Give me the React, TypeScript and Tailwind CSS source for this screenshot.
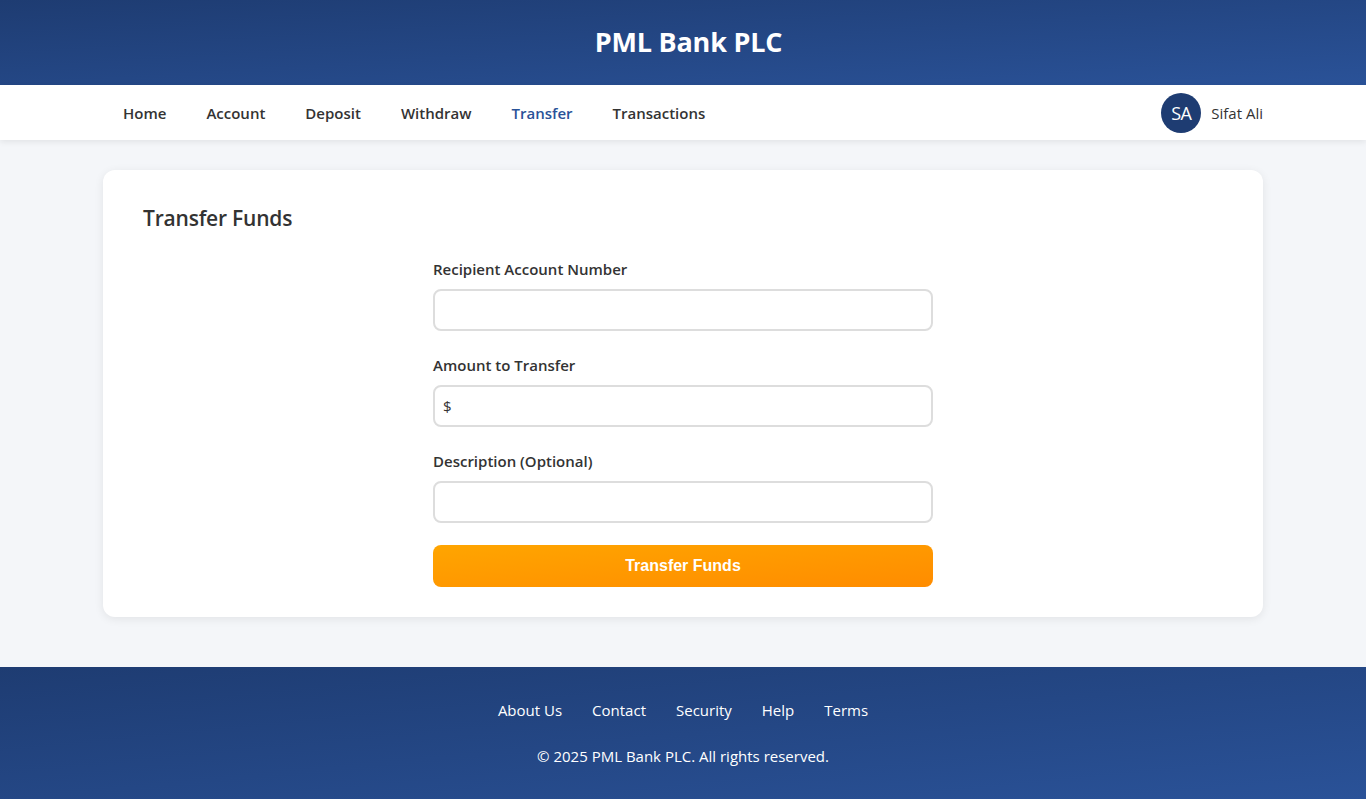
import React from "react";

const font = { fontFamily: '"Open Sans", "Noto Sans", sans-serif' };

export default function App() {
  const links = ["Home", "Account", "Deposit", "Withdraw", "Transfer", "Transactions"];
  return (
    <div className="min-h-screen flex flex-col bg-[#f4f6f9] text-[#333]" style={font}>
      <header className="h-[85px] flex items-center justify-center bg-gradient-to-br from-[#1e3c72] to-[#2a5298]">
        <h1 className="text-[27px] font-bold text-white tracking-[-0.2px] -mt-[1px] pl-[11px]">PML Bank PLC</h1>
      </header>
      <nav className="bg-white shadow-[0_2px_6px_rgba(0,0,0,0.08)] relative z-10">
        <div className="max-w-[1200px] mx-auto px-5 h-[55px] flex items-center justify-between">
          <div className="flex items-center pt-[2px]">
            {links.map((l) => (
              <a
                key={l}
                className={`px-5 text-[15px] font-semibold ${l === "Transfer" ? "text-[#2a5298]" : "text-[#333]"}`}
              >
                {l}
              </a>
            ))}
          </div>
          <div className="flex items-center gap-[10px] pt-[1px]">
            <div className="w-10 h-10 rounded-full bg-[#1e3c72] text-white flex items-center justify-center text-[18px] tracking-[-0.5px]">
              SA
            </div>
            <span className="text-[15px] text-[#333]">Sifat Ali</span>
          </div>
        </div>
      </nav>
      <main className="flex-1 pt-[30px] pb-[50px]">
        <div className="max-w-[1200px] mx-auto px-5">
          <div className="bg-white rounded-xl shadow-[0_2px_10px_rgba(0,0,0,0.08)] px-10 pt-[33px] pb-[30px]">
            <h2 className="text-[21px] font-semibold text-[#333] leading-[30px] tracking-[-0.2px]">Transfer Funds</h2>
            <form className="w-[500px] mx-auto mt-[25px]">
              <div className="mb-[23px]">
                <label className="block text-[15px] font-semibold leading-[22px] mb-[9px]">Recipient Account Number</label>
                <input className="w-full h-[42px] border-2 border-[#ddd] rounded-lg px-[10px] outline-none" />
              </div>
              <div className="mb-[23px]">
                <label className="block text-[15px] font-semibold leading-[22px] mb-[9px]">Amount to Transfer</label>
                <div className="relative">
                  <span className="absolute left-[10px] top-1/2 -translate-y-1/2 text-[15px] text-[#333]">$</span>
                  <input className="w-full h-[42px] border-2 border-[#ddd] rounded-lg pl-[25px] pr-[10px] outline-none" />
                </div>
              </div>
              <div className="mb-[22px]">
                <label className="block text-[15px] font-semibold leading-[22px] mb-[9px]">Description (Optional)</label>
                <input className="w-full h-[42px] border-2 border-[#ddd] rounded-lg px-[10px] outline-none" />
              </div>
              <button
                type="button"
                className="w-full h-[42px] rounded-lg bg-gradient-to-br from-[#ffa500] to-[#ff8c00] text-white font-bold text-[16px]"
                style={{ fontFamily: '"Liberation Sans", Arial, sans-serif' }}
              >
                Transfer Funds
              </button>
            </form>
          </div>
        </div>
      </main>
      <footer className="h-[132px] bg-gradient-to-br from-[#1e3c72] to-[#2a5298] text-white flex flex-col items-center pt-[31px]">
        <div className="flex gap-[30px] text-[15px] leading-[24px]">
          <a>About Us</a>
          <a>Contact</a>
          <a>Security</a>
          <a>Help</a>
          <a>Terms</a>
        </div>
        <p className="mt-[22px] text-[15px] leading-[24px]">© 2025 PML Bank PLC. All rights reserved.</p>
      </footer>
    </div>
  );
}
